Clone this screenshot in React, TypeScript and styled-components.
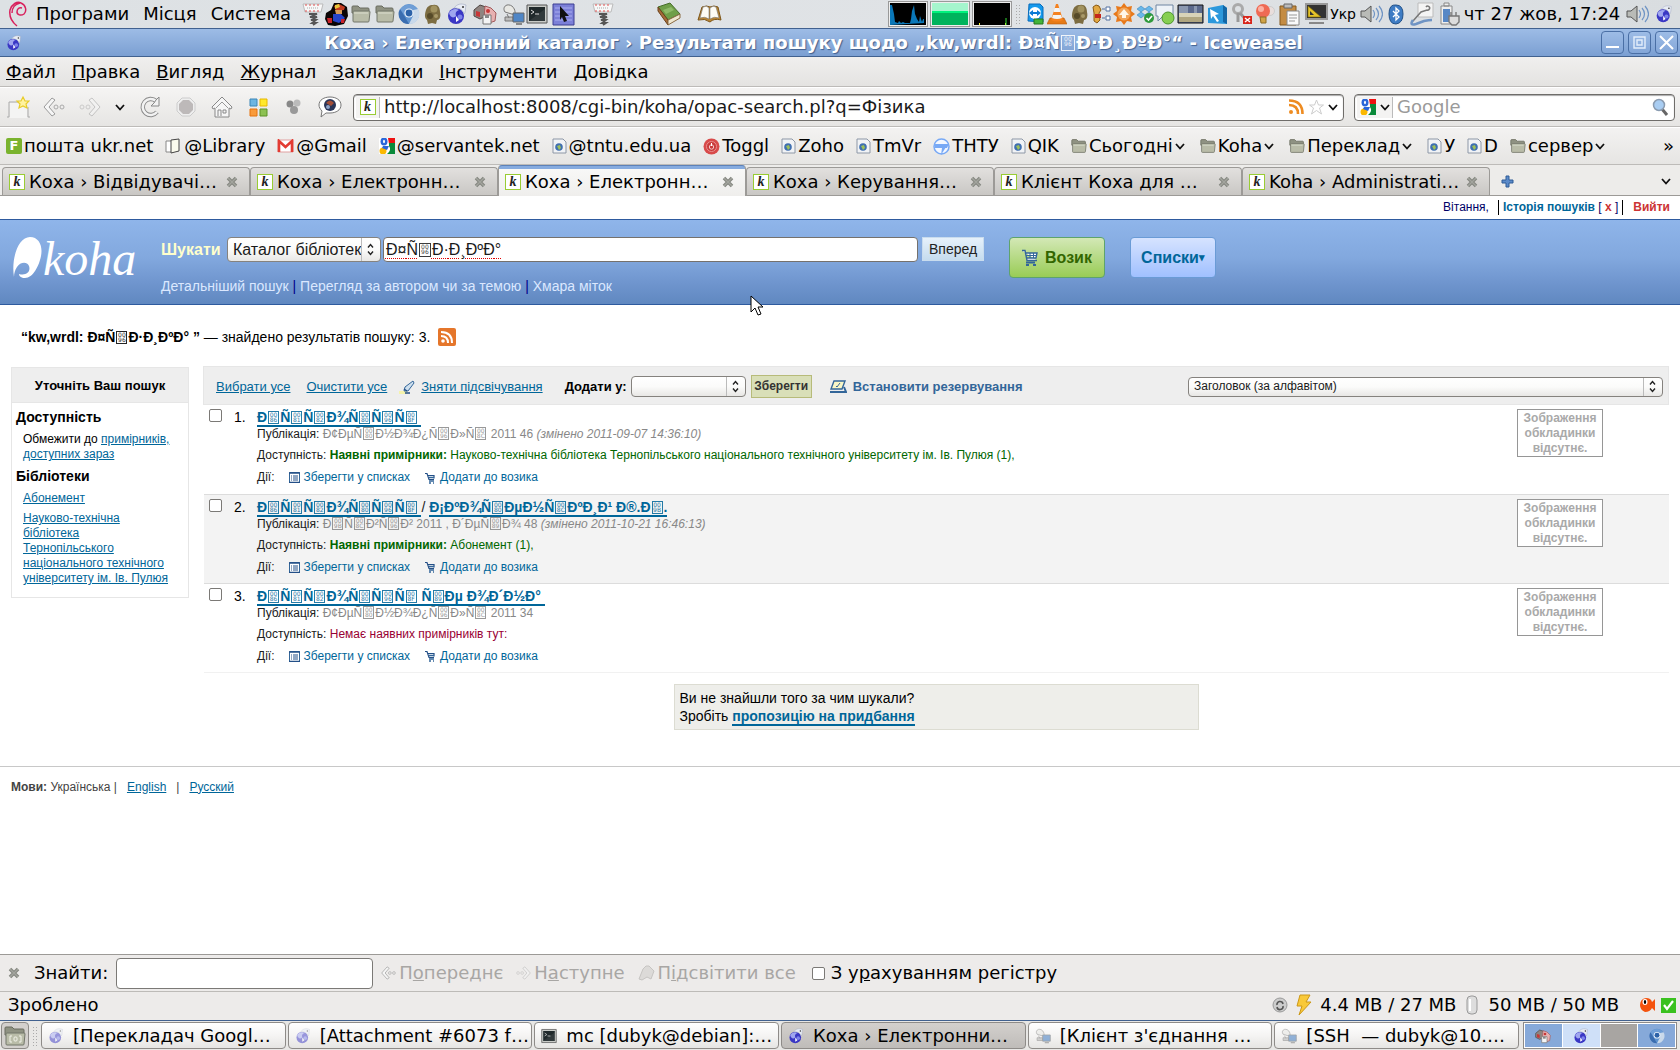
import React from "react";
import styled, { createGlobalStyle, css } from "styled-components";

const Global = createGlobalStyle`
  *, *::before, *::after { box-sizing: border-box; }
  body { margin: 0; background: #fff; }
  button, input, select { font: inherit; margin: 0; }
  svg { flex: none; }
`;

const sans = '"Liberation Sans", Arial, sans-serif';
const ui = '"DejaVu Sans", Verdana, sans-serif';

/* ---------- desktop shell ---------- */

const Desktop = styled.div`
  display: flex;
  flex-direction: column;
  height: 100vh;
  overflow: hidden;
  font: 18px/22px ${ui};
  color: #000;
  white-space: nowrap;
`;

const Panel = styled.header`
  display: flex;
  align-items: center;
  height: 28px;
  flex: none;
  padding: 0 4px 0 8px;
  background: linear-gradient(90deg, #dde1e4, #e0e3e6 60%, #d9dde0);
`;

const PanelMenu = styled.nav`
  display: flex;
  gap: 14px;
  width: 274px;
  padding-left: 9px;
`;

const PlainButton = styled.button`
  border: 0;
  padding: 0;
  background: none;
  color: inherit;
  cursor: default;
`;

const Slot = styled.span<{ $w?: number }>`
  display: inline-flex;
  flex: none;
  align-items: center;
  justify-content: center;
  width: ${(p) => p.$w ?? 24}px;
`;

const TabSlot = styled(Slot)`
  height: 28px;
`;

const Spacer = styled.span<{ $w?: number }>`
  ${(p) => (p.$w ? css`flex: none; width: ${p.$w}px;` : css`flex: 1;`)}
`;

const Monitor = styled.span`
  display: flex;
  width: 40px;
  height: 26px;
  margin-right: 2px;
  border: 1px solid #999;
  padding: 1px;
  background: #eee;
`;

const Small = styled.span`
  font-size: 14px;
`;

const Clock = styled.time`
  width: 160px;
  text-align: center;
`;

const Handle = styled.span`
  flex: none;
  width: 6px;
  height: 20px;
  margin: 0 1px;
  background-image: radial-gradient(circle, #aaa 1px, transparent 1px);
  background-size: 3px 3px;
`;

const TitleBar = styled.div`
  display: flex;
  align-items: center;
  flex: none;
  height: 29px;
  padding: 0 2px 0 6px;
  border-top: 1px solid #41618f;
  border-bottom: 1px solid #41618f;
  background: linear-gradient(#9dbce6, #7b9fd2);
  color: #fff;
  font-weight: bold;
  text-shadow: 1px 1px 1px #41618f;
`;

const WindowTitle = styled.h1`
  flex: 1;
  margin: 0;
  padding-left: 8px;
  font-size: inherit;
  text-align: center;
`;

const WindowButton = styled.button`
  display: flex;
  align-items: center;
  justify-content: center;
  width: 23px;
  height: 23px;
  margin-left: 4px;
  padding: 0;
  border: 1px solid #4a6fa5;
  border-radius: 4px;
  background: linear-gradient(#9dbce6, #83a6d8);
`;

const bar = css`
  display: flex;
  align-items: center;
  flex: none;
`;

const MenuBar = styled.nav`
  ${bar}
  height: 30px;
  gap: 16px;
  padding: 0 6px;
  border-bottom: 1px solid #bdbbb8;
  background: linear-gradient(#f0efee, #e4e3e1);
`;

const NavBar = styled.div`
  ${bar}
  height: 40px;
  padding: 0 5px 0 0;
  border-top: 1px solid #fff;
  border-bottom: 1px solid #bdbbb8;
  background: linear-gradient(#f5f4f3, #e6e5e3);
`;

const Field = styled.label<{ $grow?: boolean }>`
  ${bar}
  ${(p) => (p.$grow ? css`flex: 1;` : css`width: 321px; margin-left: 10px;`)}
  height: 27px;
  padding: 0 5px 0 0;
  overflow: hidden;
  border: 1px solid #6f6d6a;
  border-radius: 4px;
  background: #fff;
  box-shadow: inset 0 1px 1px #aaa;
`;

const FieldIcon = styled.span<{ $w: number }>`
  ${bar}
  justify-content: center;
  gap: 4px;
  width: ${(p) => p.$w}px;
  height: 21px;
  margin: 0 4px 0 2px;
  border-right: 1px solid #bbb;
  background: #f4f3f2;
`;

const BareInput = styled.input`
  flex: 1;
  min-width: 0;
  height: 22px;
  padding: 0;
  border: 0;
  outline: 0;
  background: none;
  color: #1a1a1a;
  &::placeholder { color: #9a9a9a; opacity: 1; }
`;

const Bookmarks = styled.nav`
  ${bar}
  height: 38px;
  gap: 12px;
  padding: 0 6px;
  border-top: 1px solid #fff;
  border-bottom: 1px solid #bdbbb8;
  background: linear-gradient(#f3f2f1, #e6e5e3);
`;

const Bookmark = styled.a<{ $menu?: boolean }>`
  display: flex;
  align-items: center;
  gap: 2px;
  padding-right: ${(p) => (p.$menu ? 3 : 0)}px;
  color: #000;
  text-decoration: none;
`;

const TabStrip = styled.div`
  display: flex;
  align-items: flex-end;
  flex: none;
  height: 31px;
  padding: 0 7px 0 2px;
  border-bottom: 1px solid #9c9a97;
  background: #edecea;
`;

const Tab = styled.div<{ $active?: boolean }>`
  display: flex;
  align-items: center;
  gap: 4px;
  flex: 0 1 248px;
  height: 28px;
  padding: 0 11px 0 6px;
  border: 1px solid #9c9a97;
  border-bottom: 0;
  border-radius: 4px 4px 0 0;
  background: linear-gradient(#e2e0de, #c9c7c4);
  ${(p) =>
    p.$active &&
    css`
      height: 31px;
      margin-bottom: -1px;
      padding-top: 2px;
      border-color: #5d82b8 #9c9a97;
      background: linear-gradient(#86abdf 3px, #f8f8f7 3px, #efeeec);
    `}
`;

const TabLabel = styled.span`
  flex: 1;
`;

/* ---------- page ---------- */

const Page = styled.main`
  flex: 1;
  min-height: 0;
  overflow: hidden;
  background: #fff;
  font: 12px/15px ${sans};
`;

const Members = styled.div`
  display: flex;
  justify-content: flex-end;
  align-items: center;
  height: 23px;
  padding: 0 10px;
  color: #000066;
`;

const MemberItem = styled.span`
  padding: 0 4px;
  border-left: 1px solid #000;
  &:first-child { border-left: 0; padding-right: 9px; }
  &:last-child { padding: 0 0 0 10px; }
`;

const Link = styled.a<{ $plain?: boolean; $bold?: boolean; $color?: string }>`
  color: ${(p) => p.$color ?? "#006699"};
  font-weight: ${(p) => (p.$bold ? "bold" : "inherit")};
  text-decoration: ${(p) => (p.$plain ? "none" : "underline")};
`;

const Masthead = styled.header`
  display: flex;
  align-items: flex-start;
  height: 86px;
  padding: 17px 0 0 12px;
  border: solid #2e5a9e;
  border-width: 1px 0;
  background: linear-gradient(#8fb5ea, #82a8de 45%, #6f95ce 75%, #6088c0);
`;

const Logo = styled.a`
  width: 149px;
  flex: none;
  margin-top: -8px;
`;

const SearchForm = styled.form`
  width: 823px;
`;

const SearchRow = styled.div`
  display: flex;
  align-items: flex-start;
  height: 26px;
  font-size: 16px;
`;

const SearchLabel = styled.label`
  width: 66px;
  line-height: 25px;
  font-weight: bold;
  color: #ffffcc;
`;

const SelectBox = styled.span<{ $w?: number; $h: number; $size: number }>`
  position: relative;
  display: flex;
  align-items: center;
  flex: none;
  width: ${(p) => p.$w}px;
  height: ${(p) => p.$h}px;
  border: 1px solid #85827e;
  border-radius: 4px;
  background: linear-gradient(#fff, #fbfbfa 50%, #e8e7e5);
  font-size: ${(p) => p.$size}px;
  svg { position: absolute; right: 5px; pointer-events: none; }
`;

const Select = styled.select`
  appearance: none;
  width: calc(100% - 18px);
  height: 100%;
  padding: 0 0 0 5px;
  border: 0;
  border-right: 1px solid #bbb;
  outline: 0;
  background: none;
  color: #1a1a1a;
  text-overflow: clip;
`;

const TermBox = styled.span`
  position: relative;
  width: 536px;
  margin-left: 2px;
`;

const TermInput = styled.input`
  width: 100%;
  height: 25px;
  padding: 0 2px;
  border: 1px solid #75716d;
  border-radius: 4px;
  outline: 0;
  background: #fff;
  color: transparent;
`;

const TermText = styled.span`
  position: absolute;
  left: 3px;
  top: 3px;
  line-height: 19px;
  color: #1a1a1a;
  pointer-events: none;
  text-decoration: underline dotted #e00000 1px;
  text-underline-offset: 3px;
`;

const GoButton = styled.button`
  width: 62px;
  height: 24px;
  margin-left: 4px;
  padding: 0;
  border: 1px solid #c9dcee;
  background: linear-gradient(#e6f1fb, #c5dcee);
  color: #222;
  font-size: 14px;
`;

const MoreSearches = styled.nav`
  margin-top: 15px;
  color: #00008b;
  font-size: 14px;
  line-height: 16px;
`;

const BigButton = styled.button<{ $w: number; $green?: boolean }>`
  display: flex;
  align-items: center;
  justify-content: center;
  gap: 7px;
  width: ${(p) => p.$w}px;
  height: 41px;
  margin: 0 25px 0 0;
  padding: 0;
  border: 1px solid ${(p) => (p.$green ? "#5ea36c" : "#6a9bd6")};
  border-radius: 4px;
  background: ${(p) =>
    p.$green ? "linear-gradient(#d3e8b6, #99cc55)" : "linear-gradient(#d6e3ff, #a0c0ff)"};
  color: ${(p) => (p.$green ? "#336600" : "#006699")};
  font-weight: bold;
  font-size: 16px;
`;

const Caret = styled.span`
  margin-left: -7px;
  font-size: 11px;
`;

const Summary = styled.p`
  display: flex;
  align-items: center;
  gap: 8px;
  height: 20px;
  margin: 22px 0 19px 21px;
  font-size: 14px;
`;

const Columns = styled.div`
  display: grid;
  grid-template-columns: 178px 1fr;
  gap: 14px;
  align-items: start;
  padding: 0 11px;
`;

const Refine = styled.aside`
  margin-top: 1px;
  padding-bottom: 6px;
  border: 1px solid #e6e6e6;
  white-space: normal;
`;

const RefineTitle = styled.h2`
  height: 35px;
  margin: 0;
  border-bottom: 1px solid #e6e6e6;
  background: #eee;
  font-size: 13px;
  line-height: 36px;
  text-align: center;
`;

const FacetTitle = styled.h3`
  margin: 6px 4px 7px;
  font-size: 14px;
  line-height: 16px;
`;

const FacetItem = styled.p`
  margin: 0 17px 5px 11px;
`;

const Results = styled.section`
  min-width: 0;
`;

const Toolbar = styled.div`
  ${bar}
  height: 39px;
  padding: 2px 5px 0 12px;
  border: 1px solid #e6e6e6;
  background: #eee;
  font-size: 13px;
`;

const AddLabel = styled.label`
  margin: 0 4px 0 22px;
  font-weight: bold;
`;

const SaveButton = styled.button`
  width: 61px;
  height: 23px;
  margin: 0 18px 0 5px;
  padding: 0;
  border: 1px solid #b7bb7a;
  background: #d9dfb8;
  color: #333;
  font-weight: bold;
  font-size: 12px;
`;

const HoldButton = styled.button`
  display: flex;
  align-items: center;
  gap: 6px;
  padding: 0;
  border: 0;
  background: none;
  color: #336699;
  font-weight: bold;
`;

const ResultTable = styled.table`
  width: calc(100% - 1px);
  margin-left: 1px;
  border-collapse: collapse;
`;

const Row = styled.tr<{ $shade?: boolean }>`
  height: 89px;
  background: ${(p) => (p.$shade ? "#f3f3f3" : "#fff")};
  border-bottom: 1px solid ${(p) => (p.$shade ? "#dcdcdc" : "#f1f1f1")};
  &:first-child { border-bottom-color: #dcdcdc; }
`;

const Cell = styled.td<{ $w?: number }>`
  width: ${(p) => (p.$w ? `${p.$w}px` : "auto")};
  padding: 4px 0 0;
  vertical-align: top;
`;

const Tick = styled.input`
  appearance: none;
  flex: none;
  display: block;
  width: 13px;
  height: 13px;
  border: 1px solid #7b7976;
  border-radius: 2px;
  background: #fff;
  ${Cell} & { margin-left: 5px; }
`;

const Ordinal = styled.span`
  font-size: 14px;
  line-height: 17px;
`;

const Title = styled.a`
  display: inline-block;
  height: 18px;
  border-bottom: 2px solid #006699;
  color: #006699;
  font-size: 14px;
  font-weight: bold;
  line-height: 17px;
  text-decoration: none;
  white-space: pre;
`;

const Line = styled.div<{ $top?: number; $big?: boolean }>`
  display: flex;
  align-items: center;
  white-space: pre;
  height: ${(p) => (p.$big ? 18 : 15)}px;
  margin-top: ${(p) => p.$top ?? 0}px;
  font-size: ${(p) => (p.$big ? 14 : 12)}px;
  color: #202020;
`;

const Tone = styled.span<{ $c: string }>`
  color: ${(p) => p.$c};
`;

const Action = styled.a`
  display: flex;
  align-items: center;
  gap: 3px;
  margin-left: 15px;
  color: #006699;
  text-decoration: none;
`;

const Cover = styled.span`
  display: block;
  width: 86px;
  height: 48px;
  padding: 1px 4px;
  border: 1px solid #969696;
  background: #fff;
  color: #a9a9a9;
  font-size: 12px;
  font-weight: bold;
  line-height: 15px;
  text-align: center;
  white-space: normal;
`;

const Suggest = styled.div`
  width: 525px;
  height: 46px;
  margin: 11px auto 0;
  padding: 4px 5px;
  border: 1px solid #dcdcd2;
  background: #eeeeea;
  font-size: 14px;
  line-height: 18px;
`;

const SuggestLink = styled.a`
  border-bottom: 2px solid #006699;
  color: #006699;
  font-weight: bold;
  text-decoration: none;
`;

const Languages = styled.footer`
  display: flex;
  margin-top: 36px;
  padding: 13px 11px;
  border-top: 1px solid #c8c8c8;
  color: #444;
`;

const LangItem = styled.span`
  margin-left: 10px;
`;

const Pointer = styled.svg`
  position: fixed;
  left: 750px;
  top: 295px;
`;

/* ---------- bottom bars ---------- */

const FindBar = styled.div`
  ${bar}
  height: 37px;
  padding: 0 8px;
  border-top: 1px solid #9c9a97;
  background: #edebea;
`;

const FindLabel = styled.label`
  display: flex;
  align-items: center;
  gap: 8px;
  margin-left: 14px;
`;

const FindInput = styled.input`
  width: 257px;
  height: 31px;
  border: 1px solid #7b7976;
  border-radius: 4px;
  background: #fff;
`;

const FindButton = styled.button`
  display: flex;
  align-items: center;
  gap: 3px;
  margin: 0 5px 0 8px;
  padding: 0;
  border: 0;
  background: none;
  color: #a8a6a4;
`;

const CheckLabel = styled.label`
  display: flex;
  align-items: center;
  gap: 6px;
  margin-left: 11px;
`;

const StatusBar = styled.div`
  ${bar}
  height: 29px;
  padding: 0 4px 2px 8px;
  border-top: 1px solid #bdbbb8;
  background: #edebea;
`;

const TaskBar = styled.div`
  ${bar}
  gap: 2px;
  height: 30px;
  padding: 0 3px 0 1px;
  border-top: 1px solid #41618f;
  background: #e8e7e5;
`;

const TaskButton = styled.button<{ $active?: boolean }>`
  ${bar}
  flex: 1 1 0;
  gap: 9px;
  height: 27px;
  padding: 0 6px;
  overflow: hidden;
  border: 1px solid #8e8b88;
  border-radius: 4px;
  background: ${(p) =>
    p.$active ? "linear-gradient(#d3d0cd, #bfbcb9)" : "linear-gradient(#fff, #f5f4f3 50%, #e6e5e3)"};
  white-space: pre;
`;

const DesktopButton = styled.button`
  ${bar}
  justify-content: center;
  width: 28px;
  height: 27px;
  padding: 0;
  border: 1px solid #8e8b88;
  border-radius: 4px;
  background: #d3d0cd;
`;

const Pager = styled.div`
  display: grid;
  grid-template-columns: repeat(4, 1fr);
  gap: 1px;
  width: 154px;
  height: 27px;
  margin-left: 2px;
  padding: 1px;
  border: 1px solid #8e8b88;
  background: #fff;
`;

const Workspace = styled.span<{ $bg: string }>`
  display: flex;
  align-items: center;
  justify-content: center;
  background: ${(p) => p.$bg};
`;

/* ---------- mis-decoded text ---------- */

const HexBox = styled.span<{ $code: string; $s: number }>`
  display: inline-block;
  width: ${(p) => p.$s - 2}px;
  height: ${(p) => p.$s}px;
  margin: 0 1px;
  border: 1px solid currentColor;
  font: 6px/5px ${ui};
  text-align: center;
  text-decoration: none;
  text-shadow: none;
  white-space: pre;
  vertical-align: -2px;
  overflow: hidden;
  opacity: 0.85;
  &::before { content: "00\\A ${(p) => p.$code}"; }
`;

/* UTF-8 bytes read as Latin-1; C1 controls become code boxes. */
function Garbled({ children, size = 13 }: { children: string; size?: number }) {
  const out: React.ReactNode[] = [];
  new TextEncoder().encode(children).forEach((b, i) => {
    if (b >= 0x80 && b < 0xa0) {
      out.push(<HexBox key={i} $s={size} $code={b.toString(16).toUpperCase()} />);
    } else {
      out.push(String.fromCharCode(b));
    }
  });
  return <span>{out}</span>;
}

/* ---------- icons ---------- */

const svg = (w: number, h: number, body: React.ReactNode, vb?: string) => (
  <svg width={w} height={h} viewBox={vb ?? `0 0 ${w} ${h}`} aria-hidden="true">{body}</svg>
);

const Debian = () => svg(19, 26, <path d="M9 25C4 21 1 15 2 9 4 3 9 0 13 2c5 2 6 8 3 11-3 2-7 1-7-2 0-3 2-5 5-4M12 2C7 3 4 7 4 12" fill="none" stroke="#d8205c" strokeWidth="1.500" />);
const Spring = () => svg(22, 24, <>
  <path d="M1 2h20l-2 8H3z" fill="#f8f8f8" stroke="#bbb" /><path d="M3 3h16M3 9h16" stroke="#e05050" strokeDasharray="2 2" /><path d="M5 6h12" stroke="#aaa" strokeDasharray="1 1" />
  <path d="M7 12h8l-7 3h7l-6 3h5l-4 3h4l-3 2" fill="none" stroke="#555" strokeWidth="1.800" />
</>);
const Mario = () => svg(24, 24, <>
  <path d="M9 1h7l6 4 1 9-4 8-9 2-7-1-3-6 1-6 5-3z" fill="#0a0505" /><path d="M9 4l5-2 6 3-1 3-8 1z" fill="#c33b20" /><path d="M10 3l4-1 1 3-5 2z" fill="#e8c73a" /><path d="M10 8h7v4h-6z" fill="#d69a58" /><path d="M8 12l8 0 4 4-6 5-6-2z" fill="#2543c8" /><path d="M2 16l5 0 0 5-4 0zM16 17l4 0-1 4-3 0z" fill="#c8242a" />
</>);
const Folder = ({ s = 20 }: { s?: number }) => svg(s, s, <>
  <path d="M1 3q0-1 1-1h5l2 2h8q1 0 1 1v4H1z" fill="#8f9282" stroke="#6b6d60" />
  <path d="M3 7h15q1 0 1 1l-1 9q0 1-1 1H3q-1 0-1-1V8q0-1 1-1z" fill="#b9bca8" stroke="#73766a" /><path d="M3 9h14" stroke="#dcdecf" />
</>, "0 0 20 20");
const DesktopFolder = () => svg(22, 22, <>
  <path d="M1 3q0-1 1-1h6l2 2h9q1 0 1 1v5H1z" fill="#8f9282" stroke="#6b6d60" />
  <path d="M3 8h17q1 0 1 1l-1 10q0 1-1 1H3q-1 0-1-1V9q0-1 1-1z" fill="#b9bca8" stroke="#73766a" />
  <path d="M6 11v6h2M6 11h2M17 11v6h-2M17 11h-2" fill="none" stroke="#f2f3ea" /><rect x="10" y="12" width="3" height="4" rx="1" fill="none" stroke="#f2f3ea" />
</>);
const Chromium = ({ s = 22 }: { s?: number }) => svg(s, s, <>
  <circle cx="11" cy="11" r="10" fill="#5f93cf" /><path d="M2 6q9-9 18 0l-9 1-4 6z" fill="#6f9ed6" /><path d="M20 6a10 10 0 0 1-9 15l4-8V7z" fill="#c9d9ea" /><path d="M2 6l5 8 4 7A10 10 0 0 1 2 6" fill="#3a6db0" /><circle cx="11" cy="10" r="4.600" fill="#e9f1fa" /><circle cx="11" cy="10" r="3.400" fill="#2c62a8" />
</>, "0 0 22 22");
const Gnu = () => svg(18, 22, <>
  <path d="M9 2c5-1 7 3 7 7 1 4 0 8-3 8l-1 4-4-1-4 1-1-4C0 15 1 10 2 7c1-3 3-5 7-5z" fill="#7d6d42" /><circle cx="10" cy="6" r="3.500" fill="#a29360" /><circle cx="6" cy="13" r="3" fill="#564a28" /><circle cx="12" cy="13" r="2" fill="#a89968" />
</>);
const Weasel = ({ s = 22, dim }: { s?: number; dim?: boolean }) => svg(s, s, <g opacity={dim ? 0.5 : 1}>
  <circle cx="10" cy="13" r="8" fill="#3a37c4" /><path d="M3 10c2-4 7-5 10-3-3 1-4 3-3 6-3 3-6 1-7-3z" fill="#9fa6ef" /><circle cx="14" cy="14" r="2.500" fill="#7d83ea" />
  <path d="M8 5c3-4 7-5 12-3-1 4 0 7-2 9-1-4-4-6-10-6z" fill="#e8ecf4" stroke="#a8b0c6" strokeWidth=".7" /><circle cx="17" cy="4" r="1" fill="#333" /><path d="M10 13v6l3-2z" fill="#fff" />
</g>, "0 0 22 22");
const VBox = ({ s = 24 }: { s?: number }) => svg(s, s, <>
  <path d="M1 8l6-5 6 2v9l-6 3-6-3z" fill="#8f8480" stroke="#4c4441" /><path d="M3 9l4 1v5l-4-1z" fill="#c73737" /><path d="M12 4l6 2 5 5-1 8-6 2-5-5z" fill="#e7b1b1" stroke="#a25b5b" /><path d="M10 13h8v9h-8z" fill="#f4f4f4" stroke="#777" /><path d="M12 13h4v3h-4z" fill="#888" /><circle cx="15" cy="9" r="2" fill="#c73737" />
</>, "0 0 24 24");
const Remote = ({ s = 23, dim }: { s?: number; dim?: boolean }) => svg(s, s, <g opacity={dim ? 0.6 : 1}>
  <path d="M5 2c5-1 9 4 8 10L3 9c-2-3-1-6 2-7z" fill="#e8e8e4" stroke="#777" /><path d="M3 14h8v4H3zM5 11l2 4" fill="#bbb" stroke="#777" /><path d="M11 10h11v9H11z" fill="#4f86c6" stroke="#666" /><path d="M14 20h6v2h-6z" fill="#888" />
</g>, "0 0 23 23");
const Terminal = ({ s = 22 }: { s?: number }) => svg(s, s, <>
  <path d="M1 2h20v18H1z" fill="#c9cbc7" stroke="#555" /><path d="M3 4h16v14H3z" fill="#20292b" /><path d="M5 7l3 2-3 2M9 11h4" fill="none" stroke="#ddd" /><path d="M3 18L19 6v12z" fill="#fff" opacity=".08" />
</>, "0 0 22 22");
const PointerTile = () => svg(24, 24, <>
  <path d="M1 2h21v21H1z" fill="#7c80d8" stroke="#3c3e92" /><path d="M3 6h17M3 10h17M3 14h17M3 18h17" stroke="#a9adf0" /><path d="M8 4l9 10-4 0 2 5-3 1-2-5-2 3z" fill="#111" />
</>);
const GreenBook = () => svg(24, 24, <>
  <path d="M1 5l12-4 10 11-12 6z" fill="#6f9f48" stroke="#466c28" /><path d="M1 5l10 13v5L1 9z" fill="#a56b38" stroke="#6b421d" /><path d="M11 18l12-6v4l-12 7z" fill="#efe7d0" stroke="#8a6a42" /><path d="M6 8l8-3 3 3-8 4z" fill="#8fbb68" />
</>);
const OpenBook = () => svg(25, 22, <>
  <path d="M1 17L5 4q5-2 8 0 4-2 8 0l3 13q-7-2-11 2-5-4-12-2z" fill="#b98534" stroke="#7d5518" /><path d="M3 15L6 4q4-2 6 1v11q-4-3-9-1zM22 15L19 4q-3-2-6 1v11q4-3 9-1z" fill="#fdfbf4" stroke="#777" strokeWidth=".6" />
</>);
const CpuGraph = () => svg(36, 22, <><path d="M0 0h36v22H0z" /><path d="M0 22V2h2l2 9 1 8 3 1 1-2 2 2 2-1 2 1 5 0 1-4 1-8 2-6 1 9 2 5 2 3 1-6 2 6 1-3 1 0v4z" fill="#0a77b8" /></>);
const MemGraph = () => svg(36, 22, <><path d="M0 0h36v22H0z" fill="#a5f5cd" /><path d="M0 8h36v14H0z" fill="#00b35c" /><path d="M0 8h36v2H0z" fill="#00f27c" /></>);
const NetGraph = () => svg(36, 22, <><path d="M0 0h36v22H0z" /><path d="M5 21h1M31 21h1" stroke="#ff3" strokeWidth="2" /><path d="M32 15v7" stroke="#3d3" /></>);
const TeamViewer = () => svg(18, 22, <><path d="M3 1l11 0 3 3v15L2 18z" fill="#1599ec" stroke="#0a6cbb" /><circle cx="9" cy="10" r="6" fill="#fff" /><path d="M3 10l4-3v2h4V7l4 3-4 3v-2H7v2z" fill="#0a7bd4" /><path d="M8 16h9v5H8z" fill="#42b43a" stroke="#26761f" /></>);
const Vlc = () => svg(20, 22, <><path d="M3 15h14l3 6H0z" fill="#e57a17" stroke="#b85a0a" strokeWidth=".6" /><path d="M9 1h2l5 16q-6 3-12 0z" fill="#f58220" /><path d="M7.500 5h5l1 4h-7zM6 12h8l1 3q-5 2-10 0z" fill="#f4f4f4" /></>);
const Bear = () => svg(20, 20, <><path d="M1 3l3-2 3 1 2 4-2 3 1 7-3 3-3-2 0-5 0-3z" fill="#e2a842" stroke="#8a5a14" /><path d="M3 10h6v4H3z" fill="#c5281c" /><path d="M14 3h4v4h-4zM14 12h4v4h-4zM10 5h3M10 14h3" fill="#fff" stroke="#5370a0" /></>);
const Sun = () => svg(22, 22, <><path d="M11 0l3 4 5-1-1 5 4 3-4 3 1 5-5-1-3 4-3-4-5 1 1-5-4-3 4-3-1-5 5 1z" fill="#e8791a" /><circle cx="11" cy="11" r="6.500" fill="#f2a65a" /><path d="M11 6l5 6h-3v3H9v-3H6z" fill="#fff7e8" /></>);
const Dropbox = () => svg(18, 20, <><path d="M5 2l4 3-4 3-4-3zM13 2l4 3-4 3-4-3zM5 8l4 3-4 3-4-3zM13 8l4 3-4 3-4-3z" fill="#6ab8ea" stroke="#2a78b4" strokeWidth=".5" /><circle cx="13" cy="14" r="5" fill="#2f9a3c" /><path d="M10.500 14l2 2 3.500-4" fill="none" stroke="#fff" strokeWidth="1.600" /></>);
const Chat = () => svg(20, 22, <><path d="M1 2h17v11H8l-5 5v-5H1z" fill="#eef3f8" stroke="#6f86a2" /><circle cx="13" cy="15" r="6" fill="#86cf52" stroke="#4c962a" /></>);
const Flag = () => svg(27, 20, <><path d="M1 1h25v18H1z" fill="#5c6a8c" stroke="#111" /><path d="M2 9h23v4H2z" fill="#d8d3b8" /><path d="M2 13h23v5H2z" fill="#b0a680" /><path d="M2 2h9v7H2zM17 2h3v7h-3z" fill="#8b98b0" /></>);
const BlueTile = () => svg(21, 21, <><path d="M1 4l15-3 4 3v16L1 19z" fill="#2b98dc" /><path d="M16 1l4 3v16l-4-2z" fill="#1367a6" /><path d="M3 5l9 5-4 1 4 6-2 1-4-6-2 3z" fill="#fff" /></>);
const Keys = () => svg(22, 22, <><circle cx="7" cy="6" r="4.500" fill="none" stroke="#aaa" strokeWidth="3" /><path d="M9 10l7 8M7 10l0 9" stroke="#999" strokeWidth="3" /><path d="M12 13h9v8h-9z" fill="#d8271c" /><path d="M14 15l5 4M19 15l-5 4" stroke="#fff" strokeWidth="1.500" /></>);
const Bulb = () => svg(20, 22, <><circle cx="15" cy="8" r="4.500" fill="#e9dedc" stroke="#ccc" /><circle cx="8" cy="8" r="7" fill="#ef6a54" /><circle cx="6" cy="6" r="3" fill="#fbb0a2" /><path d="M5 14h6v6H6z" fill="#d0a448" stroke="#8b6a24" /></>);
const Clipboard = () => svg(21, 23, <><path d="M1 3h16v19H1z" fill="#c48c43" stroke="#83581e" /><path d="M5 1h8v4H5z" fill="#bbb" stroke="#666" /><path d="M8 8h12v14H8z" fill="#fafafa" stroke="#888" /><path d="M10 12h8M10 15h8M10 18h6" stroke="#999" /></>);
const Ruler = () => svg(23, 22, <><path d="M1 1h21v15H1z" fill="#333" stroke="#999" strokeWidth="2" /><path d="M3 3l13 11H3z" fill="#e4c32a" stroke="#7a6300" strokeWidth=".6" /><path d="M5 8l4 4H5z" fill="#333" /><path d="M4 19h15v2H4z" fill="#888" /></>);
const Speaker = () => svg(23, 20, <><path d="M1 7h4l6-5v16l-6-5H1z" fill="#b9bbb7" stroke="#555" /><path d="M13 6q3 4 0 8M16 4q5 6 0 12M19 2q7 8 0 16" fill="none" stroke="#6f94c4" strokeWidth="1.200" /></>);
const Bluetooth = () => svg(16, 21, <><path d="M8 1q7 0 7 9t-7 10q-7 0-7-10t7-9z" fill="#3e7cc4" stroke="#235289" /><path d="M5 7l6 6-3 3V4l3 3-6 6" fill="none" stroke="#fff" strokeWidth="1.300" /></>);
const Pen = () => svg(25, 25, <><path d="M9 1h15v14H9z" fill="#f4f4f4" stroke="#bbb" /><path d="M17 5a2 2 0 1 1 1 3l-6 2-8 9" fill="none" stroke="#777" strokeWidth="1.500" /><path d="M4 18q-4 6 3 4l8-3q5-1 8-1" fill="none" stroke="#6f94c4" strokeWidth="2.600" /></>);
const Battery = () => svg(21, 24, <><path d="M2 4h11v18H2zM5 1h5v3H5z" fill="#eee" stroke="#888" /><path d="M4 7h7v13H4z" fill="#5787c5" /><path d="M10 14h10v6l-3 3h-4l-3-3zM12 10v4M17 10v4" fill="#ddd" stroke="#777" strokeWidth="1.400" /></>);

const Chevron = ({ w = 10 }: { w?: number }) => svg(w, 7, <path d="M1 1l4 4.500L9 1" fill="none" stroke="#111" strokeWidth="1.800" />, "0 0 10 7");
const NewTab = () => svg(24, 24, <><path d="M1 22h2V7h12M22 12v10h2" fill="none" stroke="#aaa" /><path d="M4 8h12v4l5 2v9H4z" fill="#f4f4f3" /><path d="M17 2l2 4 4 0-3 3 1 4-4-2-4 2 1-4-3-3 4 0z" fill="#fff3a0" stroke="#e8cc2a" strokeWidth="1.200" /></>);
const Arrow = ({ flip, w = 22 }: { flip?: boolean; w?: number }) => svg(w, 20, <g transform={flip ? "translate(22 0) scale(-1 1)" : undefined} opacity={flip ? 0.5 : 1}><path d="M9 1l3 2-6 7 6 7-3 2-8-9z" fill="#f6f6f6" stroke="#9b9b9b" /><circle cx="13" cy="10" r="2" fill="none" stroke="#aaa" /><circle cx="19" cy="10" r="2" fill="none" stroke="#aaa" /></g>, "0 0 22 20");
const Reload = () => svg(20, 22, <><path d="M16 5A8 8 0 1 0 17 16" fill="none" stroke="#888" strokeWidth="4.400" /><path d="M16 5A8 8 0 1 0 17 16" fill="none" stroke="#f2f2f2" strokeWidth="2.600" /><path d="M19 1v9h-8l3-3 2-3z" fill="#f2f2f2" stroke="#888" /></>);
const Stop = () => svg(20, 20, <><path d="M6 1h8l5 5v8l-5 5H6l-5-5V6z" fill="#eee" stroke="#ccc" /><path d="M7 3h6l4 4v6l-4 4H7l-4-4V7z" fill="#bdb9b9" /></>);
const Home = () => svg(22, 22, <><path d="M1 11L11 1l10 10-1 2-2-1v9H4v-9l-2 1z" fill="#f6f6f6" stroke="#888" /><path d="M5 12l6-6 6 6" fill="none" stroke="#999" /><path d="M7 20v-6h3v6M12 14h3v3h-3z" fill="none" stroke="#888" /></>);
const Tiles = () => svg(19, 19, <><path d="M1 1h7v7H1z" fill="#6db5e2" stroke="#3b86b8" /><path d="M11 1h7v7h-7z" fill="#ffe92b" stroke="#e8b800" /><path d="M1 11h7v7H1z" fill="#f99b3b" stroke="#e5730e" /><path d="M11 11h7v7h-7z" fill="#8cc152" stroke="#5c9126" /></>);
const Dots = () => svg(16, 16, <><circle cx="4" cy="5" r="3.500" fill="#888" /><circle cx="11" cy="4" r="3.500" fill="#bbb" /><circle cx="8" cy="11" r="4" fill="#999" /></>);
const Bubble = () => svg(24, 22, <><path d="M12 1c6 0 11 3 11 8s-5 8-11 8H8l-5 4 1-6C2 13 1 11 1 9c0-5 5-8 11-8z" fill="#fff" stroke="#777" /><circle cx="12" cy="9" r="6" fill="#2a3558" /><path d="M8 7q4-5 8 0l-3 3z" fill="#a34e38" /><circle cx="10" cy="11" r="2" fill="#8ea3c8" /></>);

const KBox = styled.span`
  display: inline-flex;
  flex: none;
  align-items: center;
  justify-content: center;
  width: 16px;
  height: 16px;
  border: 1px solid #9c3;
  background: #fff;
  color: #222;
  font: italic bold 14px/14px "Liberation Serif", serif;
`;
const K = () => <KBox aria-hidden="true">k</KBox>;
const FBox = styled(KBox)`
  border: 0;
  border-radius: 2px;
  background: #7ab32e;
  color: #fff;
  font: bold 13px/16px ${ui};
`;
const GoogleG = () => svg(16, 16, <><path d="M0 0h16v16H0z" fill="#fff" /><path d="M9 0h7v5l-6 1z" fill="#e11" /><path d="M10 5h6v11H8q5-4 2-8z" fill="#0a8a3a" /><circle cx="4" cy="13" r="3.500" fill="#fbb800" /><ellipse cx="5" cy="3.500" rx="3.500" ry="4" fill="#2a67d9" /><ellipse cx="5" cy="3.500" rx="1" ry="1.800" fill="#fff" /><path d="M4 8h6l-2 4-5-2z" fill="#2a67d9" /></>);
const Copy = () => svg(17, 16, <><path d="M1 3h7v11H1z" fill="#fff" stroke="#888" /><path d="M6 2l8-1v12l-8 2z" fill="#fbfbee" stroke="#444" /></>);
const Gmail = () => svg(17, 14, <><path d="M1 1h15v12H1z" fill="#fff" stroke="#e0a0a0" /><path d="M2 13V2l6.500 6L15 2v11" fill="none" stroke="#e33b32" strokeWidth="2.600" /></>);
const Doc = () => svg(15, 16, <><path d="M1 1h10l3 3v11H1z" fill="#f1f3f6" stroke="#8d97a6" /><circle cx="7" cy="9" r="3.800" fill="#3f6fb0" /><path d="M5 8l3-1 1 3-2 2z" fill="#9cc05a" /></>);
const Toggl = () => svg(17, 17, <><circle cx="8.500" cy="8.500" r="8" fill="#d84a4a" /><circle cx="8.500" cy="8.500" r="5" fill="#c93a3a" stroke="#e89090" /><circle cx="8.500" cy="9" r="2.200" fill="none" stroke="#f6caca" /><path d="M8.500 5v3" stroke="#fff" /></>);
const Tntu = () => svg(17, 17, <><circle cx="8.500" cy="8.500" r="7.500" fill="#f4f8ff" stroke="#78a9f5" strokeWidth="1.500" /><path d="M1 6h15l-2 4H2zM9 10l4-1-5 8z" fill="#78a9f5" /></>);
const Rss = ({ s = 16 }: { s?: number }) => svg(s, s, <><circle cx="3" cy="13" r="2" fill="#ee8c22" /><path d="M1 6q9 0 9 9M1 1.500q13.500 0 13.500 13.500" fill="none" stroke="#ee8c22" strokeWidth="2.600" /></>, "0 0 16 16");
const RssTile = () => svg(18, 18, <><rect width="18" height="18" rx="2" fill="#e5762b" /><circle cx="5" cy="13" r="1.800" fill="#fff" /><path d="M3 8q7 0 7 7M3 4q11 0 11 11" fill="none" stroke="#fff" strokeWidth="2" /></>);
const Star = () => svg(17, 16, <path d="M8.500 1l2 5h5l-4 3 2 6-5-3.500L3.500 15l2-6-4-3h5z" fill="#fff" stroke="#ccc" />);
const Lens = () => svg(17, 18, <><path d="M10 11l5 6" stroke="#666" strokeWidth="3" /><circle cx="7" cy="7" r="5.500" fill="#a9cdf2" stroke="#8a9bb0" strokeWidth="1.500" /></>);
const Cross = () => svg(12, 12, <><path d="M2 2l8 8M10 2l-8 8" stroke="#858780" strokeWidth="3.600" /><path d="M2 2l8 8M10 2l-8 8" stroke="#a3a59e" strokeWidth="1.400" /></>);
const Plus = () => svg(13, 13, <path d="M5 1h3v4h4v3H8v4H5V8H1V5h4z" fill="#5b8ac9" stroke="#2f5c97" />);
const UpDown = () => svg(9, 13, <path d="M2 4.500l2.500-3 2.500 3M2 8.500l2.500 3 2.500-3" fill="none" stroke="#222" strokeWidth="1.400" />);
const Cart = () => svg(16, 17, <><path d="M0 1.500h3l2 10h10M4 4h11l-1 5H5" fill="#fff" stroke="#336699" strokeWidth="1.400" /><path d="M4 6.500h11M8 4v5M11.500 4v5" stroke="#336699" /><path d="M4 13.500h9M4 16h3M11 16h3" stroke="#336699" strokeWidth="2" /></>);
const ListIcon = () => svg(11, 11, <><path d="M.5.500h10v10H.5z" fill="#fff" stroke="#336699" /><path d="M0 1h11M0 10.500h11" stroke="#234f87" strokeWidth="1.500" /><path d="M2 4h1M2 6h1M2 8h1M4 4h5M4 6h5M4 8h5" stroke="#234f87" /></>);
const MiniCart = () => svg(12, 12, <><path d="M0 1.500h2l2 6h5M3 3.500h6v3" fill="none" stroke="#234f87" strokeWidth="1.200" /><path d="M4 5.500h5M4 9h5M4 11h2M8 11h1" stroke="#336699" strokeWidth="1.400" /></>);
const Marker = () => svg(16, 14, <><path d="M0 11h8v3H0z" fill="#f5f3ac" /><path d="M5 11l1-4 8-6 1 2-6 8z" fill="#cfe0ee" stroke="#336699" /><path d="M5 9l3 2M11 13h-5" stroke="#234f87" strokeWidth="1.500" /></>);
const Hold = () => svg(17, 13, <><path d="M4 1h11l-3 8H1z" fill="#f9f6c5" stroke="#336699" strokeWidth="1.400" /><path d="M0 12h16l-2-5" fill="none" stroke="#336699" strokeWidth="2" /><path d="M6 6l1 1 3-4" fill="none" stroke="#336699" /></>);
const KohaLogo = () => svg(128, 60, <>
  <path d="M2 48C-1 30 6 8 18 8c9 0 13 9 11 19-2 10-8 22-16 22-4 0-6-2-6-4 7 2 12-2 10-8-2-5-9-4-12 1-2 3-3 6-3 10z" fill="#fff" />
  <text x="31" y="46" fill="#fff" fontFamily="Liberation Serif" fontStyle="italic" fontSize="48">koha</text>
</>);

const launchers: [React.ReactNode, number][] = [
  [<Spring />, 24], [<Mario />, 24], [<Folder />, 24], [<Folder />, 24], [<Chromium />, 24], [<Gnu />, 24], [<Weasel />, 24],
  [<VBox />, 32], [<Remote />, 24], [<Terminal />, 24], [<PointerTile />, 30], [<Spring />, 48],
];
const tray: [React.ReactNode, number][] = [
  [<TeamViewer />, 22], [<Vlc />, 22], [<Gnu />, 23], [<Bear />, 22], [<Sun />, 22], [<Dropbox />, 20], [<Chat />, 20],
  [<Flag />, 30], [<BlueTile />, 24], [<Keys />, 25], [<Bulb />, 22], [<Clipboard />, 27], [<Ruler />, 27],
];
const menus = ["Файл", "Правка", "Вигляд", "Журнал", "Закладки", "Інструменти", "Довідка"];
const bookmarks: [React.ReactNode, string, boolean?][] = [
  [<FBox aria-hidden="true">F</FBox>, "пошта ukr.net"], [<Copy />, "@Library"], [<Gmail />, "@Gmail"], [<GoogleG />, "@servantek.net"],
  [<Doc />, "@tntu.edu.ua"], [<Toggl />, "Toggl"], [<Doc />, "Zoho"], [<Doc />, "TmVr"], [<Tntu />, "ТНТУ"], [<Doc />, "QIK"],
  [<Folder s={16} />, "Сьогодні", true], [<Folder s={16} />, "Koha", true], [<Folder s={16} />, "Переклад", true],
  [<Doc />, "У"], [<Doc />, "D"], [<Folder s={16} />, "сервер", true],
];
const tabs = ["Коха › Відвідувачі…", "Коха › Електронн…", "Коха › Електронн…", "Коха › Керування…", "Клієнт Коха для …", "Koha › Administrati…"];
const tasks: [React.ReactNode, string][] = [
  [<Weasel s={16} dim />, "[Перекладач Googl…"], [<Weasel s={16} dim />, "[Attachment #6073 f…"], [<Terminal s={16} />, "mc [dubyk@debian]:…"],
  [<Weasel s={16} />, "Коха › Електронни…"], [<Remote s={16} dim />, "[Клієнт з'єднання …"], [<Remote s={16} dim />, "[SSH  — dubyk@10.…"],
];

interface Result {
  title: string;
  author?: string;
  pub: React.ReactNode;
  changed?: string;
  held?: string;
}
const results: Result[] = [
  {
    title: "Історія ",
    pub: <><Garbled>Тернопіль</Garbled> 2011 46 </>,
    changed: "(змінено 2011-09-07 14:36:10)",
    held: "Науково-технічна бібліотека Тернопільського національного технічного університету ім. Ів. Пулюя (1),",
  },
  {
    title: "Історія ",
    author: "Скоренький Ю.Л.",
    pub: <><Garbled>Львів</Garbled> 2011 , <Garbled>дещо</Garbled> 48 </>,
    changed: "(змінено 2011-10-21 16:46:13)",
    held: "Абонемент (1),",
  },
  { title: "Історія ще одна ", pub: <><Garbled>Тернопіль</Garbled> 2011 34</> },
];

function ResultRow({ r, n }: { r: Result; n: number }) {
  return (
    <Row $shade={n === 2}>
      <Cell $w={30}><Tick type="checkbox" aria-label={`Результат ${n}`} /></Cell>
      <Cell $w={23}><Ordinal>{n}.</Ordinal></Cell>
      <Cell>
        <Line $big>
          <Title href="#"><Garbled>{r.title}</Garbled></Title>
          {r.author && <>/ <Title href="#"><Garbled>{r.author}</Garbled></Title></>}
        </Line>
        <Line>Публікація: <Tone $c="#888">{r.pub}{r.changed && <i>{r.changed}</i>}</Tone></Line>
        <Line $top={6}>
          Доступність: {r.held
            ? <Tone $c="#006600"><b>Наявні примірники:</b> {r.held}</Tone>
            : <Tone $c="#990033">Немає наявних примірників тут:</Tone>}
        </Line>
        <Line $top={7}>
          Дії:
          <Action href="#"><ListIcon />Зберегти у списках</Action>
          <Action href="#"><MiniCart />Додати до возика</Action>
        </Line>
      </Cell>
      <Cell $w={152}><Cover>Зображення обкладинки відсутнє.</Cover></Cell>
    </Row>
  );
}

export default function App() {
  return (
    <>
      <Global />
      <Desktop>
        <Panel>
          <Debian />
          <PanelMenu>
            <PlainButton>Програми</PlainButton>
            <PlainButton>Місця</PlainButton>
            <PlainButton>Система</PlainButton>
          </PanelMenu>
          {launchers.map(([icon, w], i) => <Slot key={i} $w={w}>{icon}</Slot>)}
          <Spacer $w={30} />
          <Slot><GreenBook /></Slot>
          <Spacer $w={16} />
          <Slot><OpenBook /></Slot>
          <Spacer />
          <Monitor><CpuGraph /></Monitor>
          <Monitor><MemGraph /></Monitor>
          <Monitor><NetGraph /></Monitor>
          <Handle />
          <Spacer $w={2} />
          {tray.map(([icon, w], i) => <Slot key={i} $w={w}>{icon}</Slot>)}
          <Small>Укр</Small>
          <Slot $w={30}><Speaker /></Slot>
          <Slot $w={20}><Bluetooth /></Slot>
          <Slot $w={30}><Pen /></Slot>
          <Slot $w={26}><Battery /></Slot>
          <Clock>чт 27 жов, 17:24</Clock>
          <Slot $w={30}><Speaker /></Slot>
          <Slot><Weasel s={18} /></Slot>
        </Panel>

        <TitleBar>
          <Weasel s={16} />
          <WindowTitle>
            Коха › Електронний каталог › Результати пошуку щодо „kw,wrdl: <Garbled size={16}>Фізика</Garbled>“ - Iceweasel
          </WindowTitle>
          <WindowButton aria-label="Згорнути">{svg(13, 13, <path d="M0 11h13" stroke="#fff" strokeWidth="2" />)}</WindowButton>
          <WindowButton aria-label="Розгорнути">{svg(13, 13, <path d="M1 1h11v11H1zM4 4h5v5H4z" fill="none" stroke="#e4eefb" strokeWidth="1.400" />)}</WindowButton>
          <WindowButton aria-label="Закрити">{svg(15, 15, <path d="M1 1l13 13M14 1L1 14" stroke="#fff" strokeWidth="2" />)}</WindowButton>
        </TitleBar>

        <MenuBar>
          {menus.map((m) => <PlainButton key={m}><u>{m[0]}</u>{m.slice(1)}</PlainButton>)}
        </MenuBar>

        <NavBar>
          <Slot $w={36}><NewTab /></Slot>
          <Slot $w={36}><Arrow /></Slot>
          <Slot $w={36}><Arrow flip /></Slot>
          <Slot $w={23}><Chevron /></Slot>
          <Slot $w={37}><Reload /></Slot>
          <Slot $w={36}><Stop /></Slot>
          <Slot $w={36}><Home /></Slot>
          <Slot $w={36}><Tiles /></Slot>
          <Slot $w={36}><Dots /></Slot>
          <Slot $w={36}><Bubble /></Slot>
          <Spacer $w={5} />
          <Field $grow>
            <FieldIcon $w={24}><K /></FieldIcon>
            <BareInput aria-label="Адреса" defaultValue="http://localhost:8008/cgi-bin/koha/opac-search.pl?q=Фізика" />
            <Rss /><Slot $w={24}><Star /></Slot><Chevron />
          </Field>
          <Field>
            <FieldIcon $w={36}><GoogleG /><Chevron /></FieldIcon>
            <BareInput aria-label="Пошук" placeholder="Google" />
            <Lens />
          </Field>
        </NavBar>

        <Bookmarks>
          {bookmarks.map(([icon, label, menu]) => (
            <Bookmark href="#" key={label} $menu={menu}>{icon}{label}{menu && <Chevron />}</Bookmark>
          ))}
          <Spacer />
          <PlainButton aria-label="Більше">»</PlainButton>
        </Bookmarks>

        <TabStrip>
          {tabs.map((t, i) => (
            <Tab key={i} $active={i === 2}><K /><TabLabel>{t}</TabLabel><Cross /></Tab>
          ))}
          <TabSlot $w={34}><Plus /></TabSlot>
          <Spacer />
          <TabSlot $w={14}><Chevron /></TabSlot>
        </TabStrip>

        <Page>
          <Members>
            <MemberItem>Вітання,</MemberItem>
            <MemberItem><Link href="#" $plain $bold>Історія пошуків</Link> [ <Link href="#" $plain $bold $color="#cc3333">x</Link> ]</MemberItem>
            <MemberItem><Link href="#" $plain $bold $color="#cc3333">Вийти</Link></MemberItem>
          </Members>

          <Masthead>
            <Logo href="#" aria-label="Koha"><KohaLogo /></Logo>
            <SearchForm>
              <SearchRow>
                <SearchLabel htmlFor="idx">Шукати</SearchLabel>
                <SelectBox $w={154} $h={25} $size={16}>
                  <Select id="idx"><option>Каталог бібліотеки</option></Select><UpDown />
                </SelectBox>
                <TermBox>
                  <TermInput aria-label="Пошуковий запит" />
                  <TermText><Garbled size={14}>Фізика</Garbled></TermText>
                </TermBox>
                <GoButton type="button">Вперед</GoButton>
              </SearchRow>
              <MoreSearches>
                <Link href="#" $plain $color="#dbe8ff">Детальніший пошук</Link> | <Link href="#" $plain $color="#dbe8ff">Перегляд за автором чи за темою</Link> | <Link href="#" $plain $color="#dbe8ff">Хмара міток</Link>
              </MoreSearches>
            </SearchForm>
            <Spacer $w={25} />
            <BigButton $w={96} $green><Cart />Возик</BigButton>
            <BigButton $w={86}>Списки<Caret>▾</Caret></BigButton>
          </Masthead>

          <Summary>
            <span><b>“kw,wrdl: <Garbled>Фізика</Garbled> ”</b> — знайдено результатів пошуку: 3.</span>
            <RssTile />
          </Summary>

          <Columns>
            <Refine>
              <RefineTitle>Уточніть Ваш пошук</RefineTitle>
              <FacetTitle>Доступність</FacetTitle>
              <FacetItem>Обмежити до <Link href="#">примірників, доступних зараз</Link></FacetItem>
              <FacetTitle>Бібліотеки</FacetTitle>
              <FacetItem><Link href="#">Абонемент</Link></FacetItem>
              <FacetItem><Link href="#">Науково-технічна бібліотека Тернопільського національного технічного університету ім. Ів. Пулюя</Link></FacetItem>
            </Refine>

            <Results>
              <Toolbar>
                <Link href="#">Вибрати усе</Link>
                <Spacer $w={16} />
                <Link href="#">Очистити усе</Link>
                <Spacer $w={12} />
                <Marker />
                <Spacer $w={6} />
                <Link href="#">Зняти підсвічування</Link>
                <AddLabel htmlFor="list">Додати у:</AddLabel>
                <SelectBox $w={115} $h={21} $size={12}><Select id="list" /><UpDown /></SelectBox>
                <SaveButton>Зберегти</SaveButton>
                <HoldButton><Hold />Встановити резервування</HoldButton>
                <Spacer />
                <SelectBox $w={475} $h={20} $size={12}>
                  <Select aria-label="Впорядкувати"><option>Заголовок (за алфавітом)</option></Select><UpDown />
                </SelectBox>
              </Toolbar>
              <ResultTable>
                <tbody>{results.map((r, i) => <ResultRow key={i} r={r} n={i + 1} />)}</tbody>
              </ResultTable>
              <Suggest>
                Ви не знайшли того за чим шукали?<br />
                Зробіть <SuggestLink href="#">пропозицію на придбання</SuggestLink>
              </Suggest>
            </Results>
          </Columns>

          <Languages>
            <span><b>Мови:</b> Українська |</span>
            <LangItem><Link href="#">English</Link></LangItem>
            <LangItem>|</LangItem>
            <LangItem><Link href="#">Русский</Link></LangItem>
          </Languages>
        </Page>

        <FindBar>
          <PlainButton aria-label="Закрити пошук"><Cross /></PlainButton>
          <FindLabel>Знайти: <FindInput /></FindLabel>
          <FindButton disabled><Arrow w={15} /><span>П<u>о</u>переднє</span></FindButton>
          <FindButton disabled><Arrow flip w={15} /><span>Н<u>а</u>ступне</span></FindButton>
          <FindButton disabled>{svg(17, 16, <path d="M1 14L5 4l3-3 3 0 5 5-3 8-4-2-5 3z" fill="#dcdad8" stroke="#c6c4c2" />)}<span>П<u>і</u>дсвітити все</span></FindButton>
          <CheckLabel><Tick type="checkbox" /><span>З у<u>р</u>ахуванням регістру</span></CheckLabel>
        </FindBar>

        <StatusBar>
          <span>Зроблено</span>
          <Spacer />
          {svg(16, 16, <><circle cx="8" cy="8" r="7" fill="#ccc" stroke="#999" /><path d="M5 8a3 3 0 0 1 6-1M11 9a3 3 0 0 1-6 1" fill="none" stroke="#555" strokeWidth="1.600" /></>)}
          <Slot $w={32}>{svg(16, 22, <path d="M4 1h10l-4 7h5L3 21l3-9H1z" fill="#f9c93a" stroke="#cc9818" />)}</Slot>
          <span>4.4 MB / 27 MB</span>
          <Slot $w={32}>{svg(12, 20, <><rect x="1" y="1" width="10" height="18" rx="4" fill="#ddd" stroke="#999" /><path d="M4 4v12" stroke="#fff" strokeWidth="2" /></>)}</Slot>
          <span>50 MB / 50 MB</span>
          <Spacer $w={20} />
          {svg(17, 16, <><path d="M7 1q5 0 6 4l3-3v12l-3-3q-2 4-7 4-5-2-5-7 0-6 6-7z" fill="#f4520d" /><ellipse cx="6" cy="5" rx="2.500" ry="3" fill="#fff" /><ellipse cx="6" cy="5" rx="1.200" ry="2" /></>)}
          <Spacer $w={5} />
          {svg(15, 15, <><path d="M0 0h15v15H0z" fill="#3ac11f" /><path d="M3 7l3 4 6-8" fill="none" stroke="#fff" strokeWidth="2.200" /></>)}
        </StatusBar>

        <TaskBar>
          <DesktopButton aria-label="Стільниця"><DesktopFolder /></DesktopButton>
          <Handle />
          {tasks.map(([icon, label], i) => <TaskButton key={i} $active={i === 3}>{icon}{label}</TaskButton>)}
          <Pager>
            <Workspace $bg="#86a9d9"><VBox s={16} /></Workspace>
            <Workspace $bg="#cfe0f8"><Weasel s={16} /></Workspace>
            <Workspace $bg="#a8a5a2" />
            <Workspace $bg="#86a9d9"><Chromium s={16} /></Workspace>
          </Pager>
        </TaskBar>
      </Desktop>
      <Pointer width="13" height="22" viewBox="0 0 13 22" aria-hidden="true">
        <path d="M1 1v16l4-4 3 7 3-1-3-7h5z" fill="#fff" stroke="#000" />
      </Pointer>
    </>
  );
}
